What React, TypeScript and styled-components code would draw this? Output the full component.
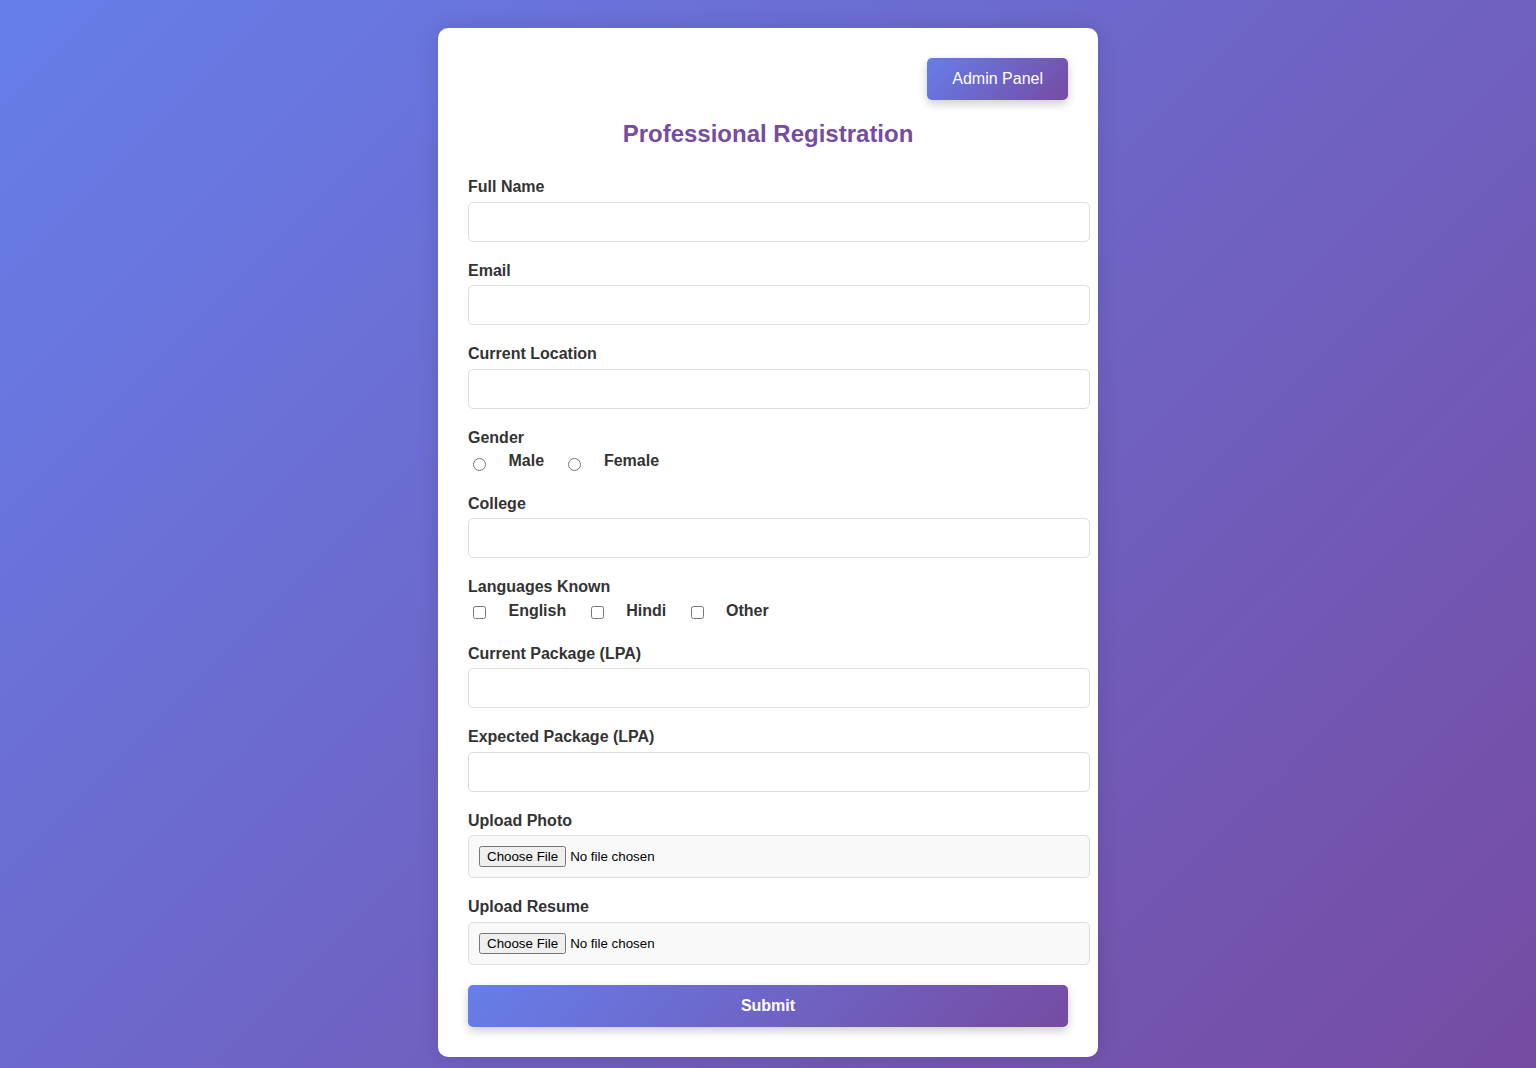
import React from "react";
import styled, { createGlobalStyle } from "styled-components";

const GlobalStyle = createGlobalStyle`
  html {
    min-height: 100%;
    background: linear-gradient(135deg, #667eea 0%, #764ba2 100%);
  }
  body {
    margin: 0;
    padding: 28px 0 20px;
    font-family: "Liberation Sans", Arial, sans-serif;
    color: #333;
  }
`;

const Card = styled.div`
  max-width: 600px;
  margin: 0 auto;
  padding: 30px;
  background: #ffffff;
  border-radius: 10px;
  box-shadow: 0 0 20px rgba(0, 0, 0, 0.12);
`;

const TopBar = styled.div`
  display: flex;
  justify-content: flex-end;
`;

const AdminButton = styled.button`
  padding: 12px 25px;
  border: none;
  border-radius: 5px;
  background: linear-gradient(135deg, #667eea 0%, #764ba2 100%);
  color: #ffffff;
  font-family: "Liberation Sans", Arial, sans-serif;
  font-size: 16px;
  line-height: 18px;
  cursor: pointer;
  box-shadow: 0 4px 10px rgba(0, 0, 0, 0.2);
`;

const Title = styled.h2`
  margin: 20px 0 30px;
  text-align: center;
  color: #764ba2;
  font-size: 24px;
  font-weight: bold;
`;

const FormGroup = styled.div`
  margin-bottom: 20px;
`;

const FieldLabel = styled.label`
  display: block;
  margin-bottom: 5px;
  font-size: 16px;
  line-height: 18.5px;
  font-weight: bold;
  color: #333;
`;

const TextInput = styled.input`
  display: block;
  width: 100%;
  height: 18px;
  padding: 10px;
  border: 1px solid #ddd;
  border-radius: 5px;
  font-family: "Liberation Sans", Arial, sans-serif;
  font-size: 16px;
  line-height: 18px;
  color: #333;
  background: #fff;
  outline: none;
`;

const FileInput = styled.input`
  display: block;
  width: 100%;
  padding: 10px;
  border: 1px solid #ddd;
  border-radius: 5px;
  background: #f9f9f9;
  font-family: "Liberation Sans", Arial, sans-serif;
  font-size: 13.33px;
  color: #000;
`;

const OptionRow = styled.div<{ $pad: number }>`
  font-size: 16px;
  padding-bottom: ${(p) => p.$pad}px;
`;

const Choice = styled.input<{ $drop: number }>`
  margin: 3px 3px 0 5px;
  vertical-align: ${(p) => -p.$drop}px;
`;

const OptionLabel = styled.label`
  margin: 0 15px;
  font-weight: bold;
  font-size: 16px;
  color: #333;
`;

const SubmitButton = styled.button`
  display: block;
  width: 100%;
  padding: 12px;
  border: none;
  border-radius: 5px;
  background: linear-gradient(135deg, #667eea 0%, #764ba2 100%);
  color: #fff;
  font-family: "Liberation Sans", Arial, sans-serif;
  font-size: 16px;
  font-weight: bold;
  line-height: 18px;
  cursor: pointer;
  box-shadow: 0 4px 10px rgba(0, 0, 0, 0.2);
`;

const textFields = [
  { id: "name", label: "Full Name", type: "text" },
  { id: "email", label: "Email", type: "email" },
  { id: "location", label: "Current Location", type: "text" },
];

export default function App() {
  return (
    <>
      <GlobalStyle />
      <Card>
        <TopBar>
          <AdminButton type="button">Admin Panel</AdminButton>
        </TopBar>
        <Title>Professional Registration</Title>
        <form onSubmit={(e) => e.preventDefault()}>
          {textFields.map((f) => (
            <FormGroup key={f.id}>
              <FieldLabel htmlFor={f.id}>{f.label}</FieldLabel>
              <TextInput id={f.id} type={f.type} />
            </FormGroup>
          ))}
          <FormGroup>
            <FieldLabel>Gender</FieldLabel>
            <OptionRow $pad={3.5}>
              <Choice $drop={5} type="radio" name="gender" id="male" />{" "}
              <OptionLabel htmlFor="male">Male</OptionLabel>{" "}
              <Choice $drop={5} type="radio" name="gender" id="female" />{" "}
              <OptionLabel htmlFor="female">Female</OptionLabel>
            </OptionRow>
          </FormGroup>
          <FormGroup>
            <FieldLabel htmlFor="college">College</FieldLabel>
            <TextInput id="college" type="text" />
          </FormGroup>
          <FormGroup>
            <FieldLabel>Languages Known</FieldLabel>
            <OptionRow $pad={5}>
              <Choice $drop={3} type="checkbox" id="english" />{" "}
              <OptionLabel htmlFor="english">English</OptionLabel>{" "}
              <Choice $drop={3} type="checkbox" id="hindi" />{" "}
              <OptionLabel htmlFor="hindi">Hindi</OptionLabel>{" "}
              <Choice $drop={3} type="checkbox" id="other" />{" "}
              <OptionLabel htmlFor="other">Other</OptionLabel>
            </OptionRow>
          </FormGroup>
          <FormGroup>
            <FieldLabel htmlFor="cur">Current Package (LPA)</FieldLabel>
            <TextInput id="cur" type="number" />
          </FormGroup>
          <FormGroup>
            <FieldLabel htmlFor="exp">Expected Package (LPA)</FieldLabel>
            <TextInput id="exp" type="number" />
          </FormGroup>
          <FormGroup>
            <FieldLabel htmlFor="photo">Upload Photo</FieldLabel>
            <FileInput id="photo" type="file" />
          </FormGroup>
          <FormGroup>
            <FieldLabel htmlFor="resume">Upload Resume</FieldLabel>
            <FileInput id="resume" type="file" />
          </FormGroup>
          <SubmitButton type="submit">Submit</SubmitButton>
        </form>
      </Card>
    </>
  );
}
